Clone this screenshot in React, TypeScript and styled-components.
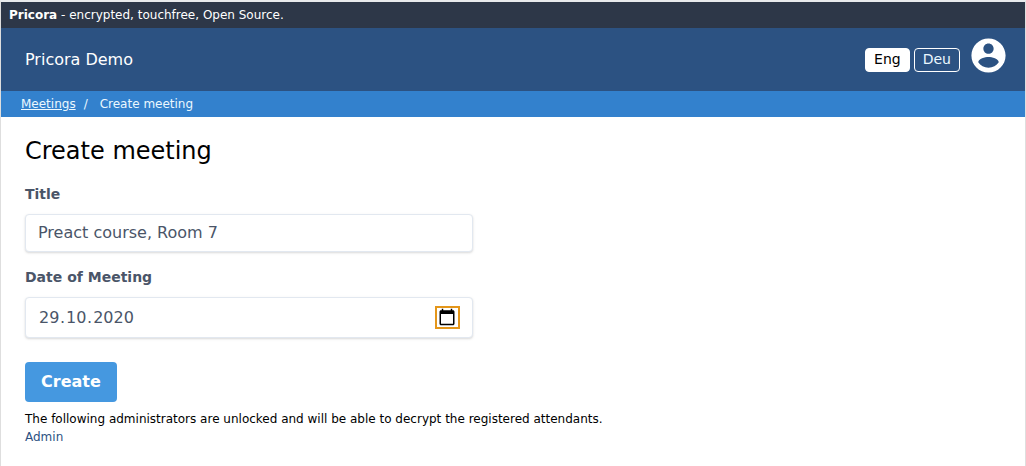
import React, { useState } from "react";
import styled, { createGlobalStyle } from "styled-components";

const GlobalStyle = createGlobalStyle`
  *, *::before, *::after { box-sizing: border-box; }
  body {
    margin: 0;
    background: #fff;
    color: #000;
    font-family: "DejaVu Sans", sans-serif;
    font-size: 16px;
    line-height: 24px;
  }
  button, input { font: inherit; color: inherit; margin: 0; }
`;

const Page = styled.div`
  min-height: 100vh;
  border: 1px solid #dedede;
  border-top: 2px solid #e8eaec;
  border-bottom: 0;
`;

const Banner = styled.div`
  padding: 4px 8px;
  background: #2d3748;
  color: #fff;
  font-size: 12px;
  line-height: 18px;
`;

const Header = styled.header`
  display: flex;
  align-items: center;
  justify-content: space-between;
  padding: 7px 16px 7px 24px;
  min-height: 63px;
  background: #2c5282;
  color: #fff;
`;

const Actions = styled.div`
  display: flex;
  align-items: center;
  align-self: stretch;
  gap: 4px;
`;

const LanguageButton = styled.button<{ $active?: boolean }>`
  height: 24px;
  padding: 0 8px;
  border: 1px solid #fff;
  border-radius: 4px;
  background: ${(p) => (p.$active ? "#fff" : "transparent")};
  color: ${(p) => (p.$active ? "#000" : "#ebf8ff")};
  font-size: 14px;
  line-height: 21px;
  cursor: pointer;
`;

const AccountButton = styled.button`
  align-self: flex-start;
  margin-left: 4px;
  padding: 0;
  border: 0;
  background: none;
  color: #fff;
  cursor: pointer;

  svg { display: block; }
`;

const Breadcrumb = styled.nav`
  display: flex;
  gap: 8px;
  padding: 4px 20px;
  background: #3381cd;
  color: #ebf8ff;
  font-size: 12px;
  line-height: 18px;

  a { color: inherit; text-decoration: underline; }
  span:last-child { margin-left: 4px; }
`;

const Main = styled.main`
  padding: 16px 24px;
`;

const Heading = styled.h1`
  margin: 0 0 16px;
  font-size: 24px;
  font-weight: 400;
  line-height: 36px;
`;

const Form = styled.form`
  display: flex;
  flex-direction: column;
  align-items: flex-start;
  max-width: 448px;
`;

const Label = styled.label`
  display: block;
  margin-bottom: 10px;
  color: #4a5568;
  font-size: 14px;
  font-weight: 700;
  line-height: 19px;
`;

const Field = styled.div`
  width: 100%;
  margin-bottom: 16px;
`;

const controlBox = `
  width: 100%;
  border: 1px solid #e2e8f0;
  border-radius: 4px;
  background: #fff;
  color: #4a5568;
  box-shadow: 0 1px 3px 0 rgba(0, 0, 0, 0.1), 0 1px 2px 0 rgba(0, 0, 0, 0.06);
  line-height: 20px;
`;

const TextInput = styled.input`
  ${controlBox}
  display: block;
  height: 38px;
  padding: 7px 12px 9px;
`;

const DateBox = styled.div`
  ${controlBox}
  display: flex;
  align-items: center;
  padding: 8px 12px;
`;

const DatePart = styled.input<{ $digits: number }>`
  width: ${(p) => p.$digits * 11}px;
  padding: 0 1px;
  border: 0;
  outline: 0;
  background: none;
`;

const PickerButton = styled.button`
  margin-left: auto;
  padding: 0 2px 1px 1px;
  border: 2px solid #e4961a;
  background: none;
  color: #000;

  svg { display: block; }
`;

const SubmitButton = styled.button`
  margin: 8px 0;
  padding: 8px 16px;
  border: 0;
  border-radius: 4px;
  background: #4598e0;
  color: #fff;
  font-weight: 700;
  cursor: pointer;
`;

const Note = styled.p`
  margin: 0;
  font-size: 12px;
  line-height: 18px;

  a { color: #2c5282; text-decoration: none; }
`;

const AccountIcon = () => (
  <svg width="41" height="41" viewBox="0 0 24 24" fill="currentColor" aria-hidden="true">
    <path d="M12 2C6.48 2 2 6.48 2 12s4.480 10 10 10 10-4.480 10-10S17.520 2 12 2zm0 3c1.660 0 3 1.340 3 3s-1.340 3-3 3-3-1.340-3-3 1.340-3 3-3zm0 14.200c-2.500 0-4.710-1.280-6-3.220.030-1.990 4-3.080 6-3.080 1.990 0 5.970 1.090 6 3.080-1.290 1.940-3.500 3.220-6 3.220z" />
  </svg>
);

const CalendarIcon = () => (
  <svg width="18" height="18" viewBox="0 0 24 24" fill="currentColor" aria-hidden="true">
    <path d="M20 3h-1V1h-2v2H7V1H5v2H4c-1.100 0-2 .9-2 2v16c0 1.100.9 2 2 2h16c1.100 0 2-.9 2-2V5c0-1.100-.9-2-2-2zm0 18H4V8h16v13z" />
  </svg>
);

export default function App() {
  const [language, setLanguage] = useState("Eng");
  const [title, setTitle] = useState("Preact course, Room 7");

  return (
    <Page>
      <GlobalStyle />
      <Banner>
        <strong>Pricora</strong> - encrypted, touchfree, Open Source.
      </Banner>
      <Header>
        <span>Pricora Demo</span>
        <Actions>
          {["Eng", "Deu"].map((name) => (
            <LanguageButton
              key={name}
              type="button"
              $active={language === name}
              aria-pressed={language === name}
              onClick={() => setLanguage(name)}
            >
              {name}
            </LanguageButton>
          ))}
          <AccountButton type="button" aria-label="Account">
            <AccountIcon />
          </AccountButton>
        </Actions>
      </Header>
      <Breadcrumb aria-label="Breadcrumb">
        <a href="#meetings">Meetings</a>
        <span>/</span>
        <span>Create meeting</span>
      </Breadcrumb>
      <Main>
        <Heading>Create meeting</Heading>
        <Form onSubmit={(event) => event.preventDefault()}>
          <Field>
            <Label htmlFor="title">Title</Label>
            <TextInput id="title" value={title} onChange={(event) => setTitle(event.target.value)} />
          </Field>
          <Field>
            <Label htmlFor="day">Date of Meeting</Label>
            <DateBox>
              <DatePart id="day" $digits={2} maxLength={2} inputMode="numeric" defaultValue="29" />
              <span>.</span>
              <DatePart aria-label="Month" $digits={2} maxLength={2} inputMode="numeric" defaultValue="10" />
              <span>.</span>
              <DatePart aria-label="Year" $digits={4} maxLength={4} inputMode="numeric" defaultValue="2020" />
              <PickerButton type="button" aria-label="Open calendar">
                <CalendarIcon />
              </PickerButton>
            </DateBox>
          </Field>
          <SubmitButton type="submit">Create</SubmitButton>
        </Form>
        <Note>The following administrators are unlocked and will be able to decrypt the registered attendants.</Note>
        <Note>
          <a href="#admin">Admin</a>
        </Note>
      </Main>
    </Page>
  );
}
